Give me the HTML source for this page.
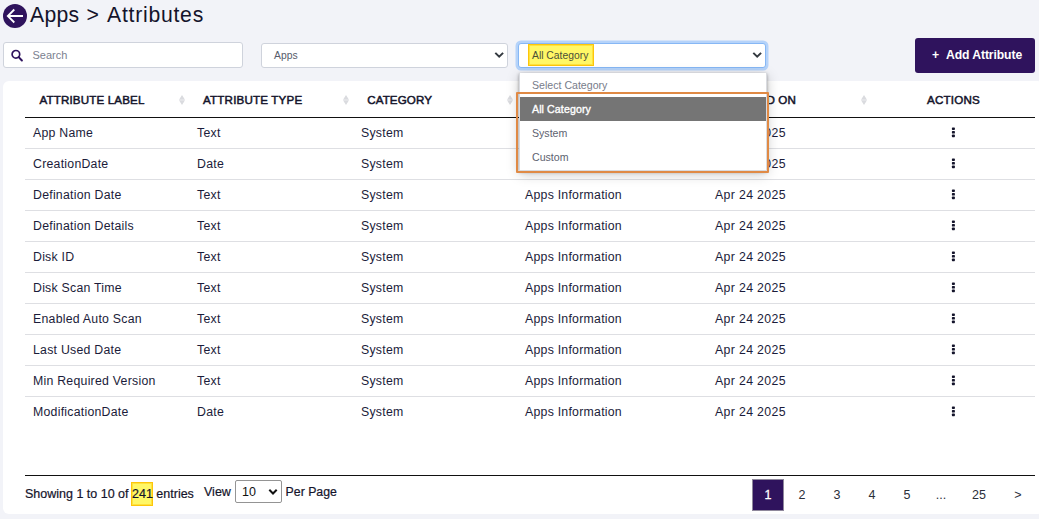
<!DOCTYPE html>
<html lang="en">
<head>
<meta charset="utf-8">
<title>Apps &gt; Attributes</title>
<style>
*{box-sizing:border-box;margin:0;padding:0}
html,body{width:1039px;height:519px;overflow:hidden}
body{background:#f2f3f8;font-family:"Liberation Sans",Arial,sans-serif;color:#1d2433;position:relative}
.abs{position:absolute}
.back{left:3px;top:4px;width:24px;height:24px}
.title{top:1px;font-size:21.2px;line-height:28px;color:#14142b;white-space:nowrap}
.box{background:#fff;border:1px solid #cfd3dc;border-radius:3px}
.search{left:3px;top:42px;width:240px;height:26px}
.search span{position:absolute;left:28.5px;top:0;line-height:24px;font-size:11px;color:#7b8190}
.search svg{position:absolute;left:7px;top:6px}
.sel1{left:261px;top:43px;width:247px;height:25px}
.sel1 span,.sel2 span.t{position:absolute;left:12px;top:0;line-height:24px;font-size:10.35px;color:#565c6b;transform:translateY(.45px)}
.chev{position:absolute;right:2.5px;top:7px}
.sel2{left:518px;top:43px;width:248px;height:25px;border:1px solid #86b7f5;box-shadow:0 0 0 2.5px #b5d3fa;border-radius:3px;background:#fff}
.hl{background:#fff766;border:1px solid #fdc60a;box-shadow:inset 0 0 0 1px rgba(253,200,10,.45)}
.sel2 .hl{position:absolute;left:9px;top:0;width:66px;height:22px}
.sel2 span.t{left:13px;color:#4b5038}
.btn{left:915px;top:38px;width:120px;height:35px;background:#2f135d;border-radius:3px;color:#fff;font-weight:bold;font-size:12.2px;line-height:34px;white-space:nowrap}
.btn span{position:absolute;top:0}
.card{left:3px;top:80.5px;width:1040px;height:433.5px;background:#fff;border-radius:6px}
.th{top:93px;font-size:11.6px;font-weight:normal;-webkit-text-stroke:.5px #14142b;color:#14142b;line-height:14px;white-space:nowrap;letter-spacing:-.25px}
.sort{top:95px;width:6px;height:10px}
.hline{left:25px;width:1010px;height:1px;background:#111}
.row{left:25px;width:1010px;height:31px;border-bottom:1px solid #dedfe3}
.row span{position:absolute;top:0;line-height:30px;font-size:12.3px;color:#1b1c3a;white-space:nowrap;letter-spacing:.25px}
.c1{left:8px}.c2{left:172px}.c3{left:336px}.c4{left:500px}.c5{left:690px;letter-spacing:.35px !important}
.dots{position:absolute;left:926px;top:9px;width:5px;height:11px;fill:#14142b}
.foot{font-size:12.5px;line-height:16px;color:#14142b;white-space:nowrap;-webkit-text-stroke:.2px #14142b}
.pg{top:480px;height:30px;line-height:30px;font-size:12.5px;color:#2b2f3a;text-align:center;width:30px}
.pg.on{background:#2f135d;color:#fff;-webkit-text-stroke:.3px #fff;top:479px;width:32px;height:32px;line-height:30px;border:1px solid #8f889c}
.drop{left:519px;top:72.5px;width:248px;height:98px;background:#fff;border:1px solid #d9dbe0;border-top:none;box-shadow:0 1px 3px rgba(0,0,0,.35),0 3px 12px rgba(0,0,0,.22)}
.drop div{position:absolute;left:0;width:246px;height:24px;line-height:24px;padding-left:12px;font-size:10.6px;color:#5d6270}
.drop .dis{color:#777c8a}
.drop .on{background:#757575;color:#fff;-webkit-text-stroke:.35px #fff;letter-spacing:.1px}
.orange{left:516px;top:92px;width:253px;height:81px;border:2px solid #e08a45;border-radius:1px}
</style>
</head>
<body>
<svg class="abs back" viewBox="0 0 24 24"><circle cx="12" cy="12" r="12" fill="#2f135d"/><path d="M20 12H5M11.300 5.500L4.800 12l6.500 6.500" fill="none" stroke="#fff" stroke-width="1.8"/></svg>
<div class="abs title" style="left:30px;letter-spacing:.25px">Apps</div><div class="abs title" style="left:86.5px">&gt;</div><div class="abs title" style="left:107px;letter-spacing:.75px">Attributes</div>

<div class="abs box search"><svg width="13" height="13" viewBox="0 0 13 13"><circle cx="4.900" cy="5.300" r="3.800" fill="none" stroke="#2f135d" stroke-width="1.700"/><path d="M7.700 8.100L10.900 11.500" stroke="#2f135d" stroke-width="2" stroke-linecap="round"/></svg><span>Search</span></div>
<div class="abs box sel1"><span>Apps</span><svg class="chev" width="12" height="10" viewBox="0 0 12 10"><path d="M2.300 1.900l3.900 3.800 3.900-3.800" fill="none" stroke="#343a40" stroke-width="2"/></svg></div>
<div class="abs sel2"><i class="hl"></i><span class="t">All Category</span><svg class="chev" width="12" height="10" viewBox="0 0 12 10"><path d="M2.300 1.900l3.900 3.800 3.900-3.800" fill="none" stroke="#343a40" stroke-width="2"/></svg></div>
<div class="abs btn"><span style="left:17px">+</span><span style="left:31px;letter-spacing:-.1px">Add Attribute</span></div>

<div class="abs card"></div>

<div class="abs th" style="left:39.4px;letter-spacing:.15px">ATTRIBUTE LABEL</div>
<div class="abs th" style="left:203px;letter-spacing:.18px">ATTRIBUTE TYPE</div>
<div class="abs th" style="left:367.2px;letter-spacing:.12px">CATEGORY</div>
<div class="abs th" style="left:719.4px;letter-spacing:.15px">CREATED ON</div>
<div class="abs th" style="left:927px;letter-spacing:.2px">ACTIONS</div>
<svg class="abs sort" style="left:179px" viewBox="0 0 6 10"><path d="M3 0l3 4.700H0zM3 10l3-4.700H0z" fill="#dadbdf"/></svg>
<svg class="abs sort" style="left:343px" viewBox="0 0 6 10"><path d="M3 0l3 4.700H0zM3 10l3-4.700H0z" fill="#dadbdf"/></svg>
<svg class="abs sort" style="left:507px" viewBox="0 0 6 10"><path d="M3 0l3 4.700H0zM3 10l3-4.700H0z" fill="#dadbdf"/></svg>
<svg class="abs sort" style="left:861px" viewBox="0 0 6 10"><path d="M3 0l3 4.700H0zM3 10l3-4.700H0z" fill="#dadbdf"/></svg>
<div class="abs hline" style="top:117px"></div>

<div class="abs row" style="top:118px"><span class="c1">App Name</span><span class="c2">Text</span><span class="c3">System</span><span class="c4">Apps Information</span><span class="c5">Apr 24 2025</span><svg class="dots" viewBox="0 0 5 11"><rect x=".9" y=".4" width="3" height="2.600" rx=".7"/><rect x=".9" y="4" width="3" height="2.600" rx=".7"/><rect x=".9" y="7.600" width="3" height="2.600" rx=".7"/></svg></div>
<div class="abs row" style="top:149px"><span class="c1">CreationDate</span><span class="c2">Date</span><span class="c3">System</span><span class="c4">Apps Information</span><span class="c5">Apr 24 2025</span><svg class="dots" viewBox="0 0 5 11"><rect x=".9" y=".4" width="3" height="2.600" rx=".7"/><rect x=".9" y="4" width="3" height="2.600" rx=".7"/><rect x=".9" y="7.600" width="3" height="2.600" rx=".7"/></svg></div>
<div class="abs row" style="top:180px"><span class="c1">Defination Date</span><span class="c2">Text</span><span class="c3">System</span><span class="c4">Apps Information</span><span class="c5">Apr 24 2025</span><svg class="dots" viewBox="0 0 5 11"><rect x=".9" y=".4" width="3" height="2.600" rx=".7"/><rect x=".9" y="4" width="3" height="2.600" rx=".7"/><rect x=".9" y="7.600" width="3" height="2.600" rx=".7"/></svg></div>
<div class="abs row" style="top:211px"><span class="c1">Defination Details</span><span class="c2">Text</span><span class="c3">System</span><span class="c4">Apps Information</span><span class="c5">Apr 24 2025</span><svg class="dots" viewBox="0 0 5 11"><rect x=".9" y=".4" width="3" height="2.600" rx=".7"/><rect x=".9" y="4" width="3" height="2.600" rx=".7"/><rect x=".9" y="7.600" width="3" height="2.600" rx=".7"/></svg></div>
<div class="abs row" style="top:242px"><span class="c1">Disk ID</span><span class="c2">Text</span><span class="c3">System</span><span class="c4">Apps Information</span><span class="c5">Apr 24 2025</span><svg class="dots" viewBox="0 0 5 11"><rect x=".9" y=".4" width="3" height="2.600" rx=".7"/><rect x=".9" y="4" width="3" height="2.600" rx=".7"/><rect x=".9" y="7.600" width="3" height="2.600" rx=".7"/></svg></div>
<div class="abs row" style="top:273px"><span class="c1">Disk Scan Time</span><span class="c2">Text</span><span class="c3">System</span><span class="c4">Apps Information</span><span class="c5">Apr 24 2025</span><svg class="dots" viewBox="0 0 5 11"><rect x=".9" y=".4" width="3" height="2.600" rx=".7"/><rect x=".9" y="4" width="3" height="2.600" rx=".7"/><rect x=".9" y="7.600" width="3" height="2.600" rx=".7"/></svg></div>
<div class="abs row" style="top:304px"><span class="c1">Enabled Auto Scan</span><span class="c2">Text</span><span class="c3">System</span><span class="c4">Apps Information</span><span class="c5">Apr 24 2025</span><svg class="dots" viewBox="0 0 5 11"><rect x=".9" y=".4" width="3" height="2.600" rx=".7"/><rect x=".9" y="4" width="3" height="2.600" rx=".7"/><rect x=".9" y="7.600" width="3" height="2.600" rx=".7"/></svg></div>
<div class="abs row" style="top:335px"><span class="c1">Last Used Date</span><span class="c2">Text</span><span class="c3">System</span><span class="c4">Apps Information</span><span class="c5">Apr 24 2025</span><svg class="dots" viewBox="0 0 5 11"><rect x=".9" y=".4" width="3" height="2.600" rx=".7"/><rect x=".9" y="4" width="3" height="2.600" rx=".7"/><rect x=".9" y="7.600" width="3" height="2.600" rx=".7"/></svg></div>
<div class="abs row" style="top:366px"><span class="c1">Min Required Version</span><span class="c2">Text</span><span class="c3">System</span><span class="c4">Apps Information</span><span class="c5">Apr 24 2025</span><svg class="dots" viewBox="0 0 5 11"><rect x=".9" y=".4" width="3" height="2.600" rx=".7"/><rect x=".9" y="4" width="3" height="2.600" rx=".7"/><rect x=".9" y="7.600" width="3" height="2.600" rx=".7"/></svg></div>
<div class="abs row" style="top:397px;border-bottom:none"><span class="c1">ModificationDate</span><span class="c2">Date</span><span class="c3">System</span><span class="c4">Apps Information</span><span class="c5">Apr 24 2025</span><svg class="dots" viewBox="0 0 5 11"><rect x=".9" y=".4" width="3" height="2.600" rx=".7"/><rect x=".9" y="4" width="3" height="2.600" rx=".7"/><rect x=".9" y="7.600" width="3" height="2.600" rx=".7"/></svg></div>

<div class="abs hline" style="top:475px"></div>
<div class="abs hl" style="left:131px;top:482px;width:22px;height:24px"></div>
<div class="abs foot" style="left:25px;top:486px">Showing 1 to 10 of 241 entries</div>
<div class="abs foot" style="left:204px;top:484px">View</div>
<div class="abs" style="left:235px;top:480px;width:47px;height:23px;border:1px solid #949494;border-radius:2px;background:#fff"><span style="position:absolute;left:6px;top:1px;line-height:20px;font-size:12.5px;color:#111">10</span><svg style="position:absolute;right:3px;top:7px" width="10" height="8" viewBox="0 0 10 8"><path d="M1.300 1.800l3.700 3.700L8.700 1.800" fill="none" stroke="#111" stroke-width="2"/></svg></div>
<div class="abs foot" style="left:285.6px;top:484px;font-size:12.3px">Per Page</div>

<div class="abs pg on" style="left:752px">1</div>
<div class="abs pg" style="left:787px">2</div>
<div class="abs pg" style="left:822px">3</div>
<div class="abs pg" style="left:857px">4</div>
<div class="abs pg" style="left:892px">5</div>
<div class="abs pg" style="left:926px">...</div>
<div class="abs pg" style="left:964px">25</div>
<div class="abs pg" style="left:1003px">&gt;</div>

<div class="abs drop">
<div class="dis" style="top:0">Select Category</div>
<div class="on" style="top:24px">All Category</div>
<div style="top:48px">System</div>
<div style="top:72px">Custom</div>
</div>
<div class="abs orange"></div>
</body>
</html>
